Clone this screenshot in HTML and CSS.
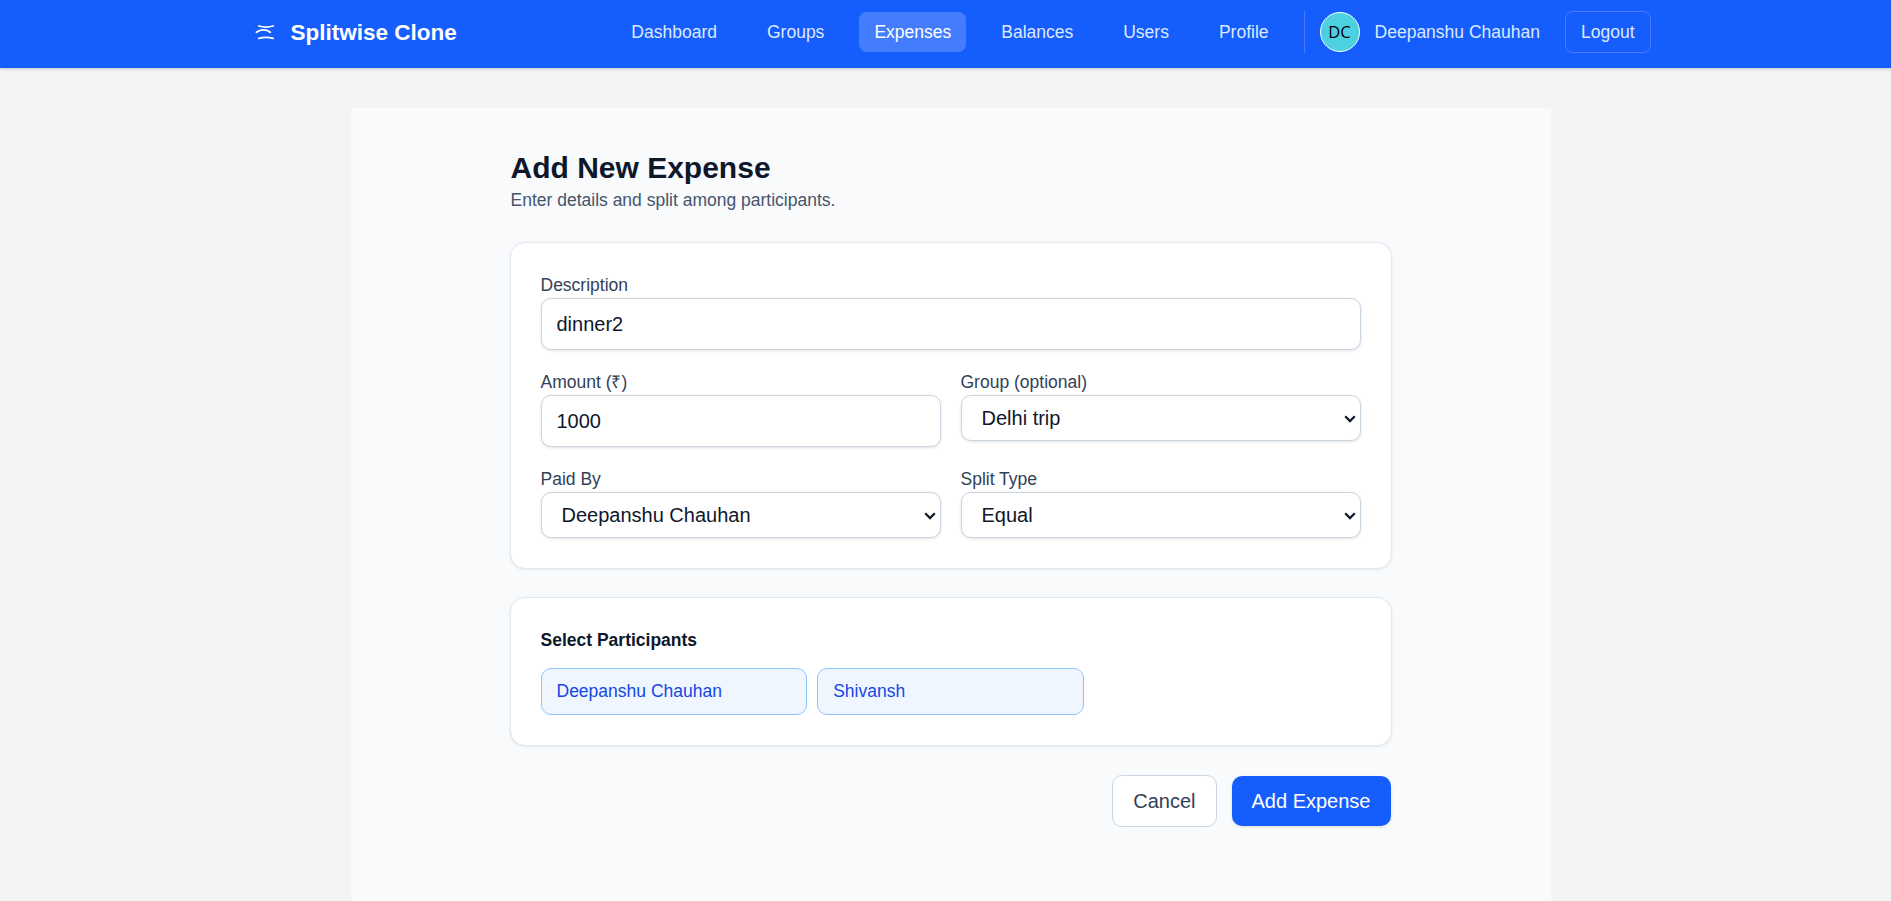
FILE: index.html
```html
<!DOCTYPE html>
<html lang="en">
<head>
<meta charset="utf-8">
<title>Splitwise Clone</title>
<link rel="stylesheet" href="styles.css">
</head>
<body>
<header class="header">
  <div class="header-inner">
    <a class="brand">
      <svg class="brand-icon" viewBox="0 0 20 16" fill="none" stroke="currentColor" stroke-width="1.8" stroke-linecap="round"><path d="M3.8 2Q11 4.2 18.2 2M1.4 8.2Q8.5 3.6 15.3 8.2M3.8 14.4Q11 12.2 18.2 14.4"/></svg>
      <span>Splitwise Clone</span>
    </a>
    <nav class="nav">
      <a class="nav-link">Dashboard</a>
      <a class="nav-link">Groups</a>
      <a class="nav-link active">Expenses</a>
      <a class="nav-link">Balances</a>
      <a class="nav-link">Users</a>
      <a class="nav-link">Profile</a>
    </nav>
    <div class="account">
      <span class="avatar">DC</span>
      <span class="user-name">Deepanshu Chauhan</span>
      <button class="logout">Logout</button>
    </div>
  </div>
</header>
<main class="page">
  <div class="content">
    <h1 class="title">Add New Expense</h1>
    <p class="subtitle">Enter details and split among participants.</p>
    <section class="card fields">
      <label class="field wide"><span>Description</span><input type="text" value="dinner2"></label>
      <label class="field"><span>Amount (₹)</span><input type="text" value="1000"></label>
      <label class="field"><span>Group (optional)</span><span class="select"><select><option>Delhi trip</option></select><svg class="chevron" viewBox="0 0 12 8"><path d="M1.2 1.3L6 6.1L10.8 1.3"/></svg></span></label>
      <label class="field"><span>Paid By</span><span class="select"><select><option>Deepanshu Chauhan</option></select><svg class="chevron" viewBox="0 0 12 8"><path d="M1.2 1.3L6 6.1L10.8 1.3"/></svg></span></label>
      <label class="field"><span>Split Type</span><span class="select"><select><option>Equal</option></select><svg class="chevron" viewBox="0 0 12 8"><path d="M1.2 1.3L6 6.1L10.8 1.3"/></svg></span></label>
    </section>
    <section class="card participants">
      <h2 class="section-title">Select Participants</h2>
      <div class="chips">
        <button class="chip">Deepanshu Chauhan</button>
        <button class="chip">Shivansh</button>
      </div>
    </section>
    <div class="actions">
      <button class="btn cancel">Cancel</button>
      <button class="btn submit">Add Expense</button>
    </div>
  </div>
</main>
</body>
</html>
```
FILE: styles.css
```css
*, *::before, *::after { box-sizing: border-box; margin: 0; }
html { overflow: hidden; }
body {
  width: 1901px;
  height: 901px;
  overflow: hidden;
  display: flex;
  flex-direction: column;
  background: #f3f4f6;
  color: #0f172b;
  font: 17.5px/25px "Liberation Sans", Arial, sans-serif;
}
button, input, select { font: inherit; color: inherit; }

.header {
  height: 68px;
  flex: none;
  background: #155dfc;
  box-shadow: 0 1px 4px rgba(0, 0, 0, .12), 0 1px 2px rgba(0, 0, 0, .08);
}
.header-inner {
  width: 1400px;
  height: 64px;
  margin: 0 auto;
  display: flex;
  align-items: center;
  color: #dbeafe;
}
.brand {
  display: flex;
  align-items: center;
  gap: 16px;
  padding-left: 4px;
  color: #fff;
  font-size: 22.5px;
  font-weight: 700;
}
.brand-icon { width: 20px; height: 16px; }
.nav { display: flex; gap: 20px; margin-left: auto; }
.nav-link { height: 40px; padding: 7px 15px 8px; border-radius: 7.5px; line-height: 26px; }
.nav-link.active { background: #437dfd; color: #fff; }
.account {
  display: flex;
  align-items: center;
  height: 42px;
  margin-left: 20px;
  padding-left: 15px;
  border-left: 1px solid #437dfd;
}
.avatar {
  width: 40px;
  height: 40px;
  border: 1px solid #fff;
  border-radius: 50%;
  background: #4dd0e1;
  color: #000;
  font: 16.5px/38px "Open Sans", sans-serif;
  text-align: center;
}
.user-name { margin: 0 25px 0 15px; }
.logout {
  height: 42px;
  padding: 0 15px;
  border: 1px solid #437dfd;
  border-radius: 7.5px;
  background: none;
}

.page {
  flex: 1;
  width: 1200px;
  margin: 40px auto 0;
  padding-top: 40px;
  background: #f8fafc;
}
.content { width: 882px; margin: 0 auto; }
.title { font-size: 30px; line-height: 40px; padding-left: 1px; }
.subtitle { color: #45556c; padding-left: 1px; }

.card {
  background: #fff;
  border: 1px solid #e2e8f0;
  border-radius: 15px;
  padding: 30px;
  box-shadow: 0 1px 3px rgba(0, 0, 0, .08);
}
.fields {
  margin-top: 29px;
  display: grid;
  grid-template-columns: 1fr 1fr;
  gap: 20px;
}
.field { display: flex; flex-direction: column; color: #314158; }
.wide { grid-column: span 2; }
.field input, .field select {
  display: block;
  width: 100%;
  border: 1px solid #cad5e2;
  border-radius: 10px;
  background: #fff;
  color: #0f172b;
  font-size: 20px;
  line-height: 30px;
  box-shadow: 0 1px 3px rgba(0, 0, 0, .12);
}
.field input { height: 52px; padding: 10px 15px; }
.field select { height: 46px; padding: 0 20px; appearance: none; }
.select { position: relative; }
.chevron {
  position: absolute;
  top: 20px;
  right: 5px;
  width: 12px;
  height: 8px;
  fill: none;
  stroke: #0f172b;
  stroke-width: 2.2;
  pointer-events: none;
}

.participants { margin-top: 28px; }
.section-title { font-size: 17.5px; line-height: 25px; font-weight: 700; }
.chips { display: grid; grid-template-columns: repeat(3, 1fr); gap: 10px; margin-top: 15px; }
.chip {
  height: 47px;
  padding: 0 15px;
  border: 1px solid #8ec5ff;
  border-radius: 10px;
  background: #eff6ff;
  color: #1447e6;
  text-align: left;
}

.actions { display: flex; justify-content: flex-end; align-items: center; gap: 15px; margin-top: 29px; padding-right: 1px; }
.btn { font-size: 20px; line-height: 30px; border-radius: 10px; }
.cancel { height: 52px; padding: 0 20px; border: 1px solid #cad5e2; background: #fff; color: #314158; }
.submit { height: 50px; padding: 0 20px; border: 0; background: #155dfc; color: #fff; box-shadow: 0 1px 3px rgba(0, 0, 0, .12); }
```
